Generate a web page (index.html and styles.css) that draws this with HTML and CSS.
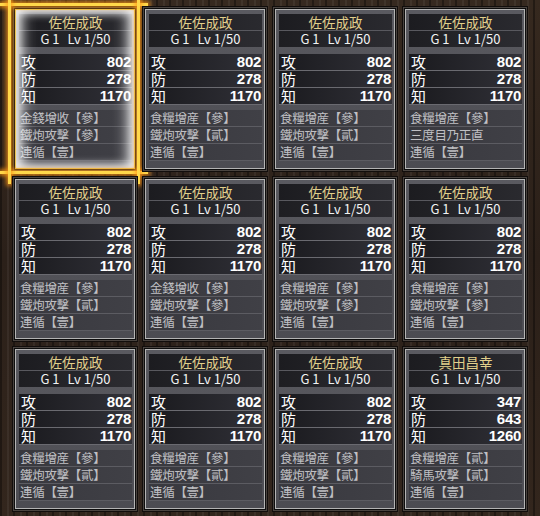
FILE: index.html
```html
<!DOCTYPE html>
<html lang="ja">
<head>
  <meta charset="UTF-8" />
  <title>武将一覧</title>
  <link rel="stylesheet" href="styles.css">
</head>
<body>
  <div class="board">
    <div id="grid" class="grid"></div>
  </div>

<script>
// === data ===
const SASSA = ['佐佐成政', 802, 278, 1170];
const cards = [
  [SASSA, ['金錢增收【參】','鐵炮攻擊【參】','連循【壹】'], true],
  [SASSA, ['食糧增産【參】','鐵炮攻擊【貳】','連循【壹】']],
  [SASSA, ['食糧增産【參】','鐵炮攻擊【貳】','連循【壹】']],
  [SASSA, ['食糧增産【參】','三度目乃正直','連循【壹】']],
  [SASSA, ['食糧增産【參】','鐵炮攻擊【貳】','連循【壹】']],
  [SASSA, ['金錢增收【參】','鐵炮攻擊【參】','連循【壹】']],
  [SASSA, ['食糧增産【參】','鐵炮攻擊【參】','連循【壹】']],
  [SASSA, ['食糧增産【參】','鐵炮攻擊【參】','連循【壹】']],
  [SASSA, ['食糧增産【參】','鐵炮攻擊【貳】','連循【壹】']],
  [SASSA, ['食糧增産【參】','鐵炮攻擊【貳】','連循【壹】']],
  [SASSA, ['食糧增産【參】','鐵炮攻擊【貳】','連循【壹】']],
  [['真田昌幸', 347, 643, 1260], ['食糧增産【貳】','騎馬攻擊【貳】','連循【壹】']]
];

// === render ===
const grid = document.getElementById('grid');
cards.forEach(([info, skills, selected])=>{
  const [name, atk, def, int] = info;
  const card = document.createElement('div');
  card.className = 'card' + (selected ? ' selected' : '');
  let html = `<div class="row name">${name}</div>`;
  html += `<div class="row level"><span>G 1</span><span>Lv 1/50</span></div>`;
  html += `<div class="stats">`;
  [['攻',atk],['防',def],['知',int]].forEach(([k,v])=>{
    html += `<div class="row stat"><span>${k}</span><b>${v}</b></div>`;
  });
  html += `</div><div class="skills">`;
  skills.forEach(s=>{ html += `<div class="row skill">${s}</div>`; });
  html += `</div>`;
  card.innerHTML = html;
  if(selected){
    const frame = document.createElement('div'); frame.className='frame';
    frame.innerHTML = '<i class="h top"></i><i class="h bottom"></i><i class="v left"></i><i class="v right"></i>';
    card.appendChild(frame);
  }
  grid.appendChild(card);
});
</script>
</body>
</html>
```

FILE: styles.css
```css
html,body{margin:0;height:100%}
body{background:#1c1512;font-family:"Noto Sans CJK JP","Noto Sans",sans-serif;overflow:hidden}
.board{
  width:540px;height:516px;box-sizing:border-box;padding:9px 0 0 15px;
  background:
    repeating-linear-gradient(90deg,rgba(0,0,0,.35) 0 2px,transparent 2px 7px,rgba(255,255,255,.05) 7px 9px,transparent 9px 13px),
    linear-gradient(180deg,#36291f,#2b2019 50%,#33261d);
}
.grid{display:grid;grid-template-columns:repeat(4,120px);grid-template-rows:repeat(3,160px);gap:10px}

.card{
  position:relative;box-sizing:border-box;height:160px;padding:4px 2px 0 3px;
  background:linear-gradient(180deg,#5a5a60,#4c4c52);
  border:1px solid #b4b4b4;
  box-shadow:0 0 0 1px #0d0d0d,0 0 0 2px #4a4440,0 0 0 3px #120e0c;
}
.row{box-sizing:border-box;display:flex;align-items:center;white-space:nowrap}
.name{height:16px;line-height:16px;justify-content:center;color:#e2d08c;font-size:13.5px;background:linear-gradient(90deg,#1c1c20,#2a2a2f)}
.level{height:16px;line-height:16px;margin-top:1px;justify-content:center;gap:8px;color:#f2f2f2;font-size:13px;background:linear-gradient(90deg,#1e1e22,#2c2c31)}
.stats{margin-top:7px}
.stat{
  height:17px;line-height:16px;justify-content:space-between;padding:0 1px 0 2px;color:#fff;font-size:15px;
  background:linear-gradient(90deg,#1a1a1e,#2a2a30 70%,#33333a);
  border-bottom:1px solid #6a6a70;
}
.stat b{font-family:"Liberation Sans",sans-serif;font-weight:700;font-size:15px;letter-spacing:-.3px}
.skills{margin-top:5px}
.skill{
  height:17px;line-height:16px;padding-left:1px;color:#c0c0c4;font-size:12.5px;letter-spacing:-.3px;
  background:linear-gradient(90deg,#38383e,#404046);
  border-bottom:1px solid #5c5c62;
}

/* selected card */
.card.selected{border-color:#e8c858}
.frame{position:absolute;inset:0;pointer-events:none;box-shadow:inset 0 0 10px 3px rgba(255,255,255,.85),inset 12px 0 14px -4px rgba(255,255,255,.55),inset -12px 0 14px -4px rgba(255,255,255,.55)}
.frame i{position:absolute;background:#ffd84a;box-shadow:0 0 4px 2px rgba(255,150,20,.75)}
.frame .h{height:3px;left:-16px;right:-14px}
.frame .top{top:-7px}
.frame .bottom{bottom:-6px}
.frame .v{width:3px;top:-10px;bottom:-16px}
.frame .left{left:-8px}
.frame .right{right:-6px}
```
